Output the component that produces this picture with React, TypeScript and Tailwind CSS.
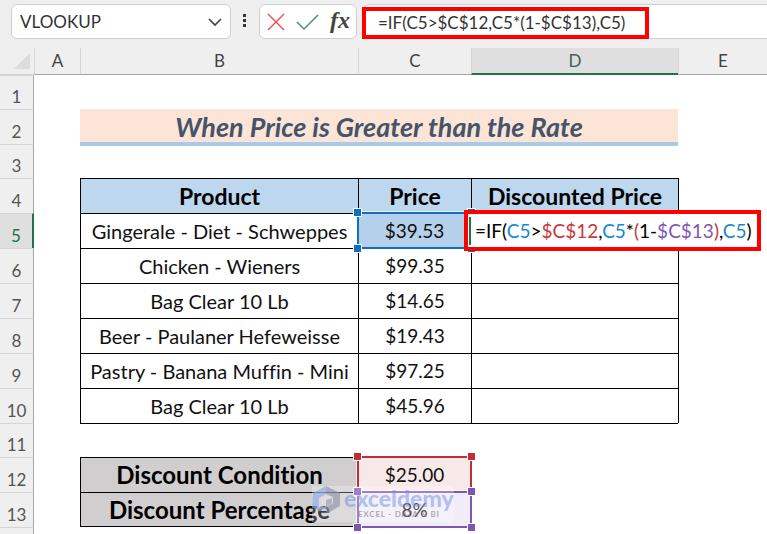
import type { ReactNode } from "react";
import clsx from "clsx";

const products = [
  { row: 5, name: "Gingerale - Diet - Schweppes", price: "$39.53" },
  { row: 6, name: "Chicken - Wieners", price: "$99.35" },
  { row: 7, name: "Bag Clear 10 Lb", price: "$14.65" },
  { row: 8, name: "Beer - Paulaner Hefeweisse", price: "$19.43" },
  { row: 9, name: "Pastry - Banana Muffin - Mini", price: "$97.25" },
  { row: 10, name: "Bag Clear 10 Lb", price: "$45.96" },
];

const cell = "border-t border-l border-black text-center p-0";

const RowLabel = ({ n, active }: { n: number; active?: boolean }) => (
  <th
    scope="row"
    className={clsx(
      "p-0 align-bottom text-center font-normal text-[17px] leading-6 border-t border-t-[#d4d4d4]",
      active
        ? "bg-[#dfdfdf] text-[#217346] border-r-2 border-r-[#217346]"
        : "bg-[#efefef] text-[#555] border-r border-r-[#a6a6a6]"
    )}
  >
    {n}
  </th>
);

const ColLabel = ({ children, active }: { children: ReactNode; active?: boolean }) => (
  <th
    scope="col"
    className={clsx(
      "p-0 font-normal text-[17px] leading-6 border-l border-l-[#d4d4d4]",
      active
        ? "bg-[#dfdfdf] text-[#3f6354] border-b-2 border-b-[#217346]"
        : "bg-[#efefef] text-[#444] border-b border-b-[#a6a6a6]"
    )}
  >
    {children}
  </th>
);

/* Coloured frame with corner handles around a referenced cell */
const RangeFrame = ({ frame, handle }: { frame: string; handle: string }) => (
  <span className={clsx("absolute -inset-px border-2 outline outline-white/70 pointer-events-none", frame)}>
    <span className={clsx("absolute -top-1.5 -left-1.5 size-[9px] border border-white", handle)} />
    <span className={clsx("absolute -top-1.5 -right-1.5 size-[9px] border border-white", handle)} />
    <span className={clsx("absolute -bottom-1.5 -left-1.5 size-[9px] border border-white", handle)} />
    <span className={clsx("absolute -bottom-1.5 -right-1.5 size-[9px] border border-white", handle)} />
  </span>
);

const Watermark = () => (
  <div className="absolute z-20 -top-1.5 -left-[46px] flex items-start gap-1 bg-white/25 pb-1 pointer-events-none">
    <svg width="28" height="28" viewBox="0 0 28 28" opacity="0.65">
      <path d="M14 0 L1 7 L0 21 L7 25 V12 L14 8 Z" fill="#8ea9e8" />
      <path d="M14 0 L28 7 V20 L16 27 L14 21 L21 17 V11 L14 8 Z" fill="#8d94a3" />
      <path d="M7 25 V20 L14 21 L16 27 L13 24 Z" fill="#b4c4ee" />
      <path d="M14 9 L20 12 V17 L14 21 L9 17 V12 Z" fill="#dfe2ea" />
      <path d="M14 14 L20 12 V17 L14 21 Z" fill="#9aa1b0" />
    </svg>
    <div className="flex flex-col items-center">
      <span className="text-[23px] leading-6 font-black text-[#6f8fe0]/50">exceldemy</span>
      <span className="text-[8px] leading-2 font-bold tracking-widest text-[#777]/60">EXCEL - DATA &amp; BI</span>
    </div>
  </div>
);

const FormulaBar = () => (
  <div className="flex items-start h-12 pt-1 pl-[11px]">
    <div className="flex items-center w-[220px] h-[35px] bg-white border border-[#cfcfcf] rounded-md pl-2 pr-1.5">
      <input
        aria-label="Name Box"
        defaultValue="VLOOKUP"
        className="min-w-0 flex-1 bg-transparent text-[17px] text-[#333] outline-none"
      />
      <button type="button" aria-label="Show names" className="p-0.5">
        <svg width="14" height="14" viewBox="0 0 14 14" fill="none" stroke="#444" strokeWidth="1.7">
          <path d="M1 4 L7 10 L13 4" />
        </svg>
      </button>
    </div>

    <svg className="mx-3 mt-2.5" width="4" height="16" viewBox="0 0 4 16" fill="#333">
      <rect x="0" y="0" width="3" height="3" />
      <rect x="0" y="5" width="3" height="3" />
      <rect x="0" y="10" width="3" height="3" />
    </svg>

    <div className="flex items-center justify-between w-[98px] h-[35px] bg-white border border-[#cfcfcf] rounded-md px-1.5">
      <button type="button" aria-label="Cancel">
        <svg width="20" height="20" viewBox="0 0 20 20" fill="none" stroke="#f14a4a" strokeWidth="1.4">
          <path d="M2 2 L18 18 M18 2 L2 18" />
        </svg>
      </button>
      <button type="button" aria-label="Enter">
        <svg width="24" height="20" viewBox="0 0 24 20" fill="none" stroke="#4b9668" strokeWidth="1.5">
          <path d="M1 10 L8 17 L22 3" />
        </svg>
      </button>
      <button
        type="button"
        aria-label="Insert Function"
        className="pb-1 font-['Liberation_Serif',serif] italic font-bold text-2xl leading-6 text-[#444]"
      >
        fx
      </button>
    </div>

    <div className="flex-1 ml-1.5 h-[35px] bg-white border-y border-l border-[#cfcfcf] rounded-l-md">
      <input
        aria-label="Formula Bar"
        defaultValue="=IF(C5>$C$12,C5*(1-$C$13),C5)"
        className="block w-[287px] h-8 mt-0.5 -ml-0.5 pl-3 pb-0.5 bg-white border-4 border-[#fe0000] text-[17px] text-[#333] outline-none"
      />
    </div>
  </div>
);

const InCellFormula = () => (
  <div className="absolute z-10 -top-1 -left-2 h-[41px] w-[297px] flex items-center border-4 border-[#fe0000] bg-white pl-px whitespace-nowrap text-black">
    <span className="w-0.5 h-7 bg-[#217346] mr-1" />
    <span>
      =IF(<span className="text-[#1a86d0]">C5</span>&gt;
      <span className="text-[#c9363c]">$C$12</span>,<span className="text-[#1a86d0]">C5</span>*
      <span className="text-[#c9363c]">(</span>1-<span className="text-[#8157b5]">$C$13</span>
      <span className="text-[#c9363c]">)</span>,<span className="text-[#1a86d0]">C5</span>)
    </span>
  </div>
);

const App = () => {
  return (
    <div className="min-h-screen overflow-hidden bg-[#efefef] font-['Lato','Liberation_Sans',sans-serif] [font-variant-ligatures:none]">
      <FormulaBar />

      <table className="w-full table-fixed border-separate border-spacing-0 bg-white text-[19px] leading-6 text-[#111]">
        <colgroup>
          <col className="w-[34px]" />
          <col className="w-[46px]" />
          <col className="w-[278px]" />
          <col className="w-[113px]" />
          <col className="w-[207px]" />
          <col />
        </colgroup>
        <thead>
          <tr className="h-[27px]">
            <td className="p-0 bg-[#efefef] border-b border-b-[#d4d4d4]">
              <svg className="ml-3.5" width="16" height="16" viewBox="0 0 16 16" fill="#dcdcdc">
                <path d="M16 0 V16 H0 Z" />
              </svg>
            </td>
            <ColLabel>A</ColLabel>
            <ColLabel>B</ColLabel>
            <ColLabel>C</ColLabel>
            <ColLabel active>D</ColLabel>
            <ColLabel>E</ColLabel>
          </tr>
        </thead>
        <tbody>
          <tr className="h-[34px]">
            <RowLabel n={1} />
            <td colSpan={5} />
          </tr>
          <tr className="h-[35px]">
            <RowLabel n={2} />
            <td />
            <td colSpan={3} className="relative p-0 bg-[#fce4d6] text-center text-[27px] leading-6 font-bold italic text-[#44546a]">
              When Price is Greater than the Rate
              <span className="absolute inset-x-0 -bottom-0.5 h-1 bg-[#a9cbea]" />
            </td>
            <td />
          </tr>
          <tr className="h-[34px]">
            <RowLabel n={3} />
            <td colSpan={5} />
          </tr>
          <tr className="h-[35px] text-[23px] text-black">
            <RowLabel n={4} />
            <td />
            <th scope="col" className={clsx(cell, "bg-[#bdd7ee]")}>Product</th>
            <th scope="col" className={clsx(cell, "bg-[#bdd7ee]")}>Price</th>
            <th scope="col" className={clsx(cell, "bg-[#bdd7ee]")}>Discounted Price</th>
            <td className="border-l border-black" />
          </tr>
          {products.map((p) => (
            <tr key={p.row} className="h-[35px]">
              <RowLabel n={p.row} active={p.row === 5} />
              <td />
              <td className={clsx(cell, "text-xl leading-6")}>{p.name}</td>
              <td className={p.row === 5 ? "relative p-0 text-center bg-[#b5d0ea]" : cell}>
                {p.price}
                {p.row === 5 && <RangeFrame frame="border-[#0f6fc0]" handle="bg-[#0f6fc0]" />}
              </td>
              <td className={clsx(cell, p.row === 5 && "relative")}>{p.row === 5 && <InCellFormula />}</td>
              <td className="border-l border-black" />
            </tr>
          ))}
          <tr className="h-[34px]">
            <RowLabel n={11} />
            <td />
            <td colSpan={3} className="border-t border-black" />
            <td />
          </tr>
          <tr className="h-[35px]">
            <RowLabel n={12} />
            <td />
            <th scope="row" className={clsx(cell, "bg-[#d0cece] text-2xl leading-6 text-black")}>Discount Condition</th>
            <td className="relative p-0 bg-[#f8e9e9] text-center">
              $25.00
              <RangeFrame frame="border-[#bf2f37]" handle="bg-[#bf2f37]" />
            </td>
            <td colSpan={2} />
          </tr>
          <tr className="h-[35px]">
            <RowLabel n={13} />
            <td />
            <th scope="row" className={clsx(cell, "border-b bg-[#d0cece] text-2xl leading-6 text-black")}>Discount Percentage</th>
            <td className="relative p-0 bg-[#f1ecf8] text-center">
              8%
              <RangeFrame frame="border-[#8056b3]" handle="bg-[#8056b3]" />
              <Watermark />
            </td>
            <td colSpan={2} />
          </tr>
          <tr className="h-[7px]">
            <td className="p-0 bg-[#efefef] border-t border-t-[#d4d4d4] border-r border-r-[#a6a6a6]" />
            <td colSpan={5} className="p-0" />
          </tr>
        </tbody>
      </table>
    </div>
  );
};

export default App;
